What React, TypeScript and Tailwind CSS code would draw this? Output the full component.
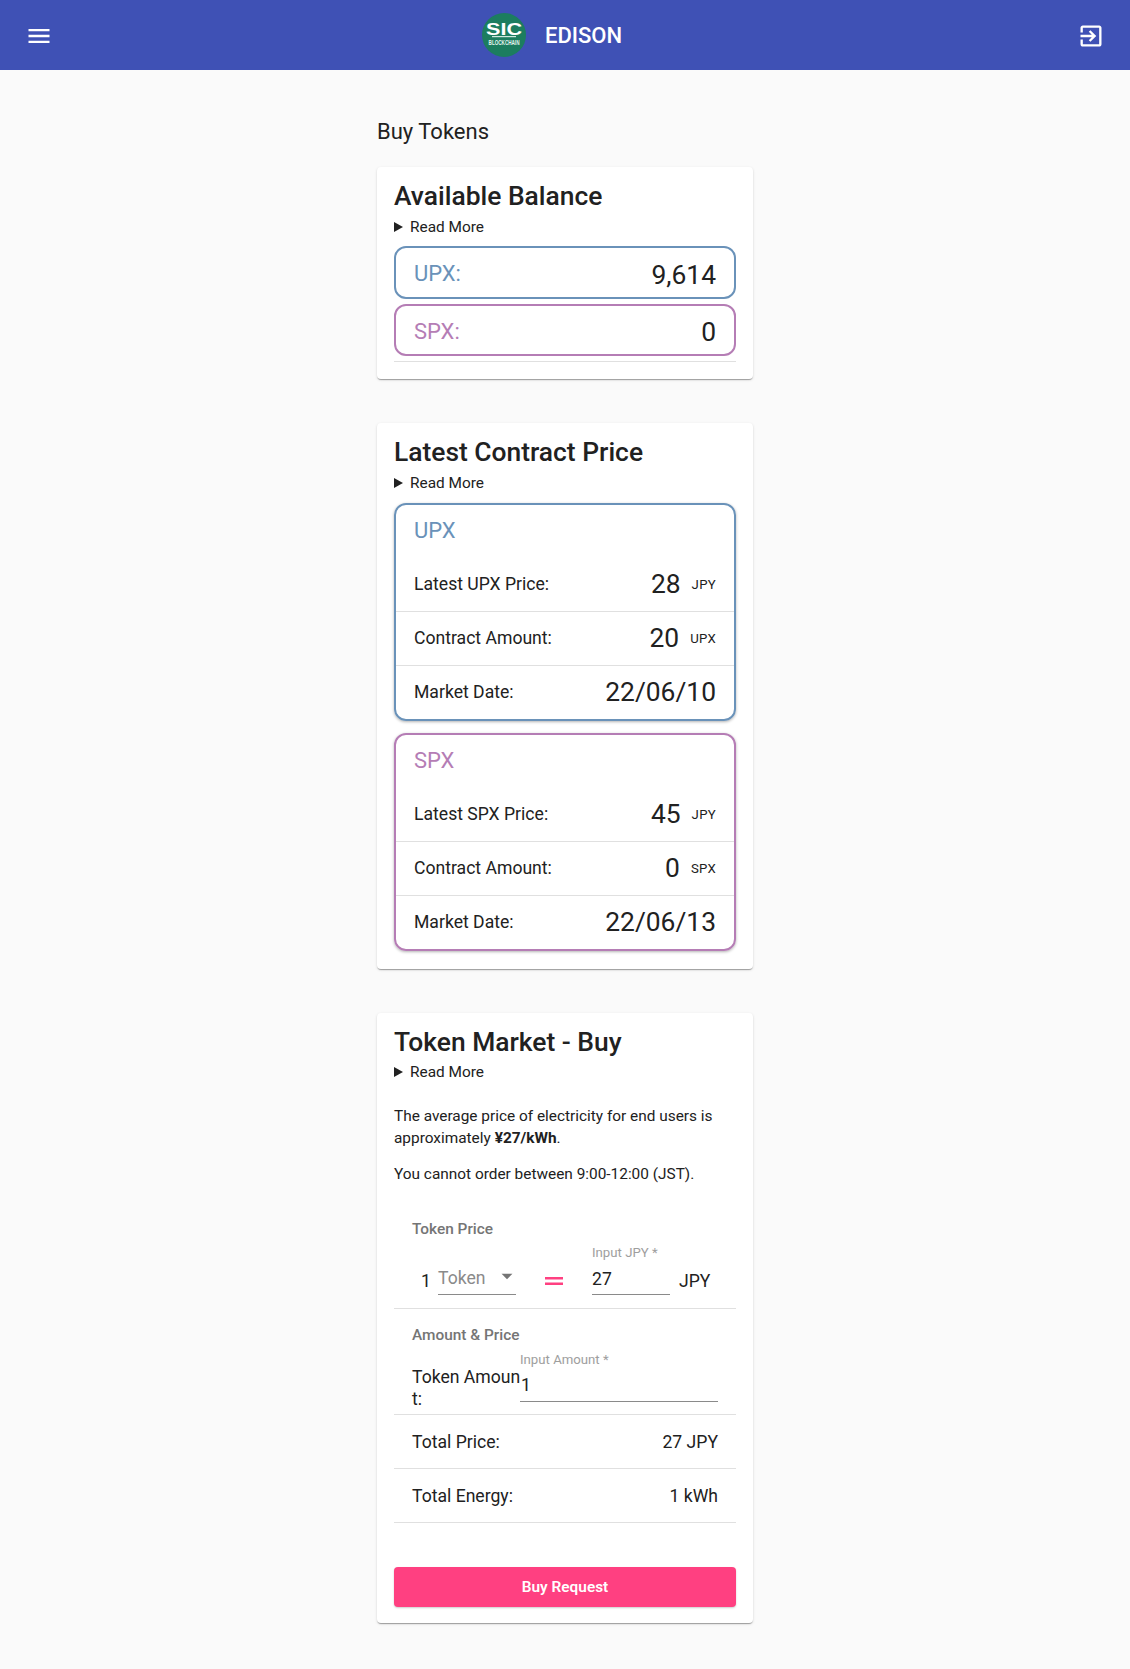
import React from "react";

const Read = ({ cls = "" }: { cls?: string }) => (
  <div className={`flex items-center h-[20px] text-[15.4px] leading-[20px] text-[#212121] ${cls}`}>
    <svg width="9" height="10" viewBox="0 0 9 10" className="mr-[7px]"><path d="M0 0L9 5L0 10Z" fill="#212121" /></svg>
    Read More
  </div>
);

const Row = ({ label, value, unit, last }: { label: string; value: string; unit?: string; last?: boolean }) => (
  <div className={`flex items-center justify-between px-[18px] ${last ? "h-[53px]" : "h-[54px] border-b border-[#e0e0e0]"}`}>
    <span className="text-[17.6px] text-[#212121]">{label}</span>
    <span className="flex items-center text-[#212121]">
      <span className="text-[26.4px]">{value}</span>
      {unit && <span className="text-[13.2px] ml-[11px] tracking-[0.3px]">{unit}</span>}
    </span>
  </div>
);

const PriceBox = ({ name, price, amount, date, cls, text }: { name: string; price: string; amount: string; date: string; cls: string; text: string }) => (
  <div className={`border-2 rounded-[12px] h-[218px] shadow-[0_1px_3px_rgba(0,0,0,0.3)] ${cls}`}>
    <div className={`h-[53px] pt-[11px] pl-[18px] text-[22px] leading-[30px] ${text}`}>{name}</div>
    <Row label={`Latest ${name} Price:`} value={price} unit="JPY" />
    <Row label="Contract Amount:" value={amount} unit={name} />
    <Row label="Market Date:" value={date} last />
  </div>
);

const Card = ({ children, cls }: { children: React.ReactNode; cls: string }) => (
  <section className={`bg-white rounded-[4px] shadow-[0_2px_1px_-1px_rgba(0,0,0,0.2),0_1px_1px_0_rgba(0,0,0,0.14),0_1px_3px_0_rgba(0,0,0,0.12)] px-[17px] ${cls}`}>
    {children}
  </section>
);

const Title = ({ children }: { children: React.ReactNode }) => (
  <h2 className="text-[26.4px] leading-[34px] font-medium text-[#212121]">{children}</h2>
);

export default function App() {
  return (
    <div className="min-h-[1669px] bg-[#fafafa] font-['Roboto',sans-serif] pb-[46px]">
      <header className="h-[70px] bg-[#3f51b5] flex items-center justify-between px-[25px] text-white">
        <svg width="28" height="28" viewBox="0 0 24 24" fill="white" className="mt-[2px]">
          <path d="M3 18h18v-2H3v2zm0-5h18v-2H3v2zm0-7v2h18V6H3z" />
        </svg>
        <div className="flex items-center mr-[28px]">
          <svg width="44" height="44" viewBox="0 0 44 44" className="mr-[19px]">
            <circle cx="22" cy="22" r="22" fill="#1c7d5f" />
            <text x="22" y="22" textAnchor="middle" transform="translate(22 0) scale(1.35 1) translate(-22 0)" fill="white" fontSize="16" fontWeight="700" fontFamily="Liberation Sans">SIC</text>
            <rect x="10" y="23" width="24" height="1.2" fill="#cfe8df" />
            <text transform="translate(22 32) scale(1 1.5)" textAnchor="middle" fill="#e6f5ef" fontSize="4.6" fontWeight="700" fontFamily="Liberation Sans">BLOCKCHAIN</text>
          </svg>
          <span className="text-[22px] font-medium leading-none w-[75px] mt-[2px]">EDISON</span>
        </div>
        <svg width="28" height="28" viewBox="0 0 24 24" fill="white" className="mt-[2px]">
          <path d="M10.09 15.59L11.5 17l5-5-5-5-1.41 1.41L12.67 11H3v2h9.67l-2.58 2.59zM19 3H5c-1.11 0-2 .9-2 2v4h2V5h14v14H5v-4H3v4c0 1.1.89 2 2 2h14c1.1 0 2-.9 2-2V5c0-1.1-.9-2-2-2z" />
        </svg>
      </header>

      <main className="w-[376px] ml-[377px]">
        <h1 className="pt-[48px] h-[97px] text-[22px] leading-[28px] font-normal text-[#212121]">Buy Tokens</h1>

        <Card cls="h-[212px] pt-[12px]">
          <Title>Available Balance</Title>
          <Read cls="mt-[4px]" />
          <div className="mt-[9px] h-[53px] pt-[2px] border-2 border-[#6a92b9] rounded-[12px] flex items-center justify-between px-[18px]">
            <span className="text-[22px] text-[#6a92b9]">UPX:</span>
            <span className="text-[26.4px] mt-[4px] text-[#212121]">9,614</span>
          </div>
          <div className="mt-[5px] h-[52px] pt-[2px] border-2 border-[#b57db5] rounded-[12px] flex items-center justify-between px-[18px]">
            <span className="text-[22px] text-[#b57db5]">SPX:</span>
            <span className="text-[26.4px] mt-[4px] text-[#212121]">0</span>
          </div>
          <div className="mt-[5px] border-b border-[#e0e0e0]" />
        </Card>

        <Card cls="mt-[44px] h-[546px] pt-[12px]">
          <Title>Latest Contract Price</Title>
          <Read cls="mt-[4px]" />
          <PriceBox name="UPX" text="text-[#6a92b9]" price="28" amount="20" date="22/06/10" cls="mt-[10px] border-[#6a92b9]" />
          <PriceBox name="SPX" text="text-[#b57db5]" price="45" amount="0" date="22/06/13" cls="mt-[12px] border-[#b57db5]" />
        </Card>

        <Card cls="mt-[44px] h-[610px] pt-[12px]">
          <Title>Token Market - Buy</Title>
          <Read cls="mt-[3px]" />
          <p className="mt-[23px] text-[15.4px] leading-[22px] text-[#212121]">
            The average price of electricity for end users is approximately <b className="font-bold">¥27/kWh</b>.
          </p>
          <p className="mt-[14px] text-[15.4px] leading-[22px] text-[#212121]">You cannot order between 9:00-12:00 (JST).</p>

          <div className="border-b border-[#e0e0e0] h-[124px]">
            <div className="pl-[18px] text-[15.4px] leading-[20px] font-medium text-[#757575] pt-[34px] h-[54px]">Token Price</div>
            <div className="flex items-start pt-[7px] pl-[27px]">
              <span className="mt-[24px] text-[17.6px] leading-[22px] text-[#212121] w-[17px]">1</span>
              <div className="mt-[14px] w-[78px] h-[35px] border-b border-[#8a8a8a] flex items-start justify-between pt-[7px] text-[17.6px] leading-[22px] text-[#8a8a8a]">
                <span>Token</span>
                <svg width="26" height="26" viewBox="0 0 24 24" fill="#757575" className="mr-[-4px] mt-[-4px]"><path d="M7 10l5 5 5-5z" /></svg>
              </div>
              <svg width="18" height="8" viewBox="0 0 18 8" className="ml-[29px] mt-[31px]"><path d="M0 0h18v2.5H0zM0 5.5h18V8H0z" fill="#ff4081" /></svg>
              <div className="ml-[29px] w-[78px]">
                <div className="text-[13.2px] leading-[14px] text-[#9e9e9e]">Input JPY *</div>
                <div className="h-[35px] pt-[8px] border-b border-[#8a8a8a] text-[17.6px] leading-[22px] text-[#212121]">27</div>
              </div>
              <span className="ml-[9px] mt-[24px] text-[17.6px] leading-[22px] text-[#212121]">JPY</span>
            </div>
          </div>

          <div className="border-b border-[#e0e0e0] h-[106px]">
            <div className="pl-[18px] text-[15.4px] leading-[20px] font-medium text-[#757575] pt-[16px] h-[36px]">Amount &amp; Price</div>
            <div className="flex items-start pl-[18px] pr-[18px]">
              <div className="w-[110px] mr-[-2px] shrink-0 pt-[21px] text-[17.6px] leading-[22px] text-[#212121] break-all">Token Amount:</div>
              <div className="flex-1 pt-[8px]">
                <div className="text-[13.2px] leading-[14px] text-[#9e9e9e]">Input Amount *</div>
                <div className="h-[35px] pt-[7px] pl-[1px] border-b border-[#8a8a8a] text-[17.6px] leading-[22px] text-[#212121]">1</div>
              </div>
            </div>
          </div>

          <div className="h-[54px] pt-[2px] border-b border-[#e0e0e0] flex items-center justify-between px-[18px] text-[17.6px] text-[#212121]">
            <span>Total Price:</span><span>27 JPY</span>
          </div>
          <div className="h-[54px] pt-[2px] border-b border-[#e0e0e0] flex items-center justify-between px-[18px] text-[17.6px] text-[#212121]">
            <span>Total Energy:</span><span>1 kWh</span>
          </div>

          <button className="mt-[44px] w-full h-[40px] pt-[2px] rounded-[4px] bg-[#ff4081] text-white text-[15.4px] font-semibold shadow-[0_1px_2px_rgba(0,0,0,0.2)]">Buy Request</button>
        </Card>
      </main>
    </div>
  );
}
